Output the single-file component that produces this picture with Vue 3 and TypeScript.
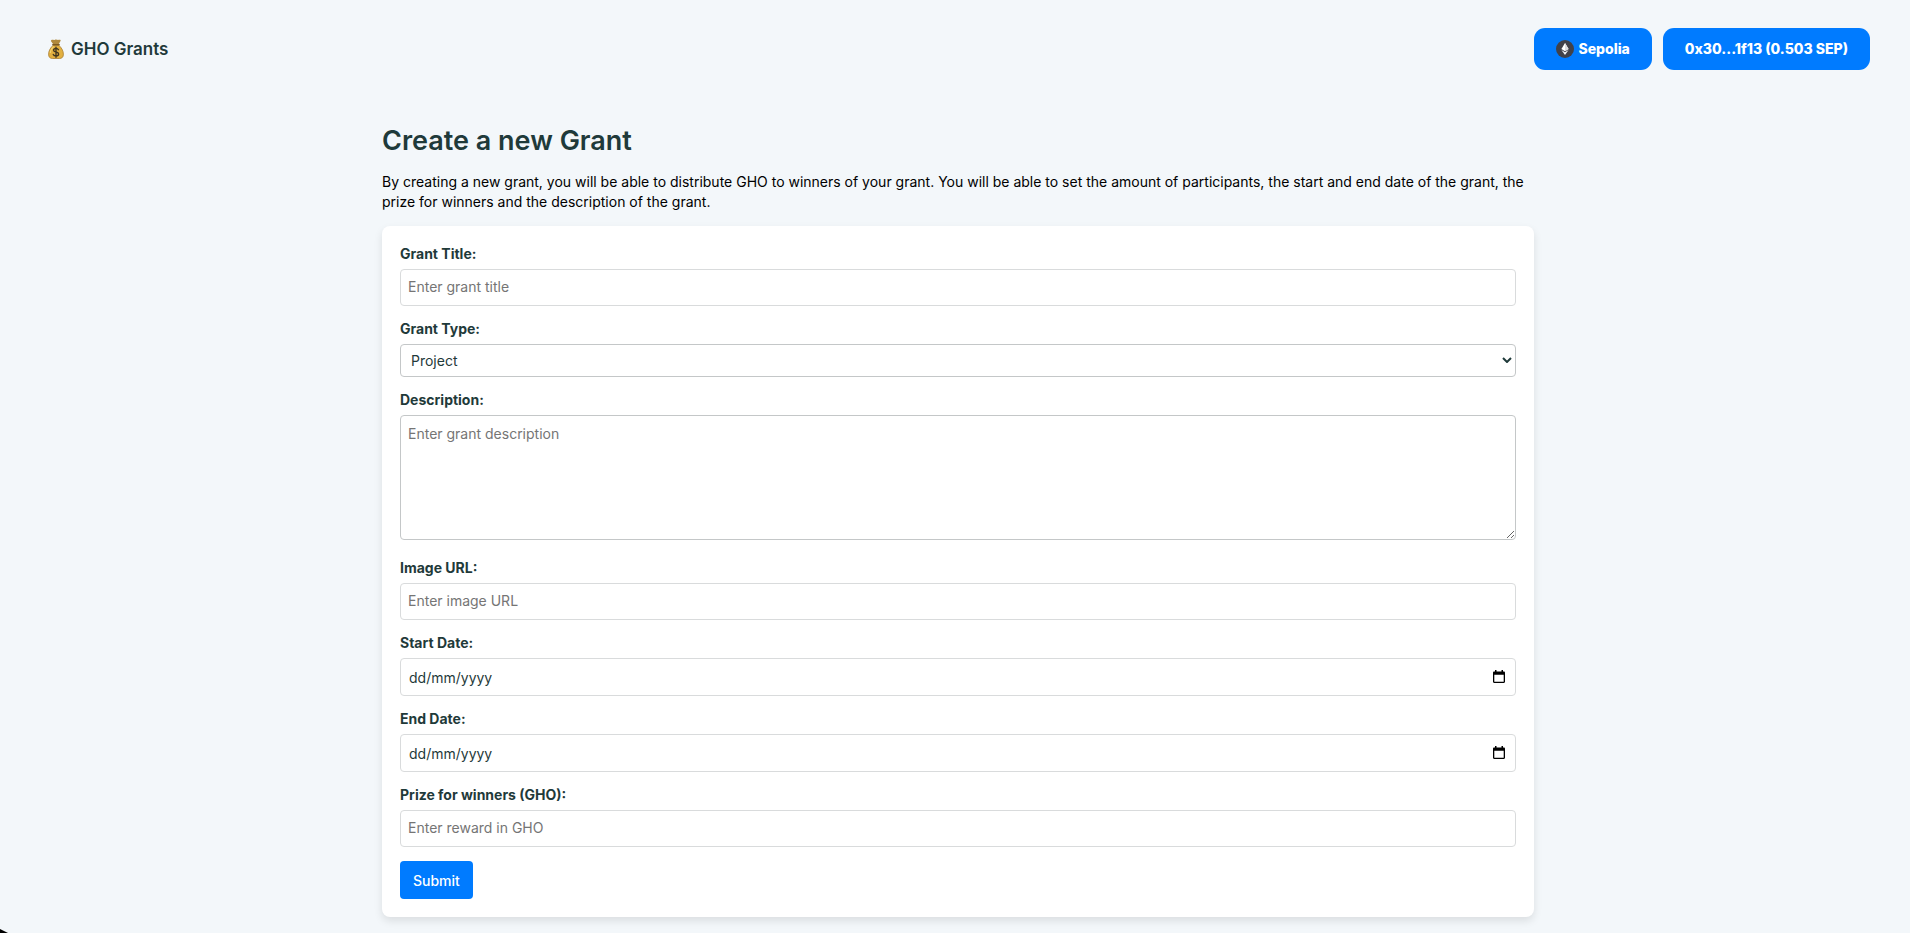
<script setup lang="ts">
import { reactive } from 'vue'

interface GrantForm {
  title: string
  type: string
  description: string
  imageUrl: string
  startDate: string
  endDate: string
  prize: string
}

const form = reactive<GrantForm>({
  title: '',
  type: 'project',
  description: '',
  imageUrl: '',
  startDate: '',
  endDate: '',
  prize: '',
})
</script>

<template>
  <div class="page">
    <header class="topbar">
      <a class="brand" href="#">
        <svg class="brand-icon" viewBox="0 0 16 20" aria-hidden="true">
          <path d="M3.200 1.200C4.600.2 5.600 1.400 7 .7 8.600 0 9.400 1.300 10.800.8c1.400-.4 2.400.2 1.700 1.300L10.600 5.400H5.400L3.200 2.600c-.4-.6-.4-1 0-1.400Z" fill="#b18a3e" />
          <path d="M5.300 6.200h5.400c2.800 2.400 4.700 5.600 4.700 9 0 3-1.500 4.200-4 4.300H4.600C2 19.400.6 18.200.6 15.200c0-3.400 1.900-6.600 4.700-9Z" fill="#e2b040" stroke="#a97e30" stroke-width=".8" />
          <path d="M2.300 13.500c.4-2.400 1.500-4.200 3-5.600" fill="none" stroke="#f5d675" stroke-width="1.200" stroke-linecap="round" />
          <path d="M4.800 5.700h6.400" stroke="#7c5a22" stroke-width="1.400" stroke-linecap="round" />
          <path d="M10.400 10.700c-.4-.9-1.300-1.300-2.400-1.300-1.400 0-2.400.7-2.400 1.800 0 2.500 5 1.200 5 3.800 0 1.200-1.100 1.900-2.600 1.900-1.300 0-2.300-.5-2.700-1.500M8 8.200v10" fill="none" stroke="#41361f" stroke-width="1.400" stroke-linecap="round" />
        </svg>
        <span>GHO Grants</span>
      </a>
      <div class="wallet">
        <button type="button" class="pill">
          <svg class="chain-icon" viewBox="0 0 18 18" aria-hidden="true">
            <circle cx="9" cy="9" r="9" fill="#414149" />
            <path d="M9 3 5.400 9 9 11.200 12.600 9Z" fill="#fff" />
            <path d="M9 3v8.200L12.600 9Z" fill="#dcdce0" />
            <path d="M5.400 10.100 9 12.300l3.600-2.200L9 15Z" fill="#f4f4f6" />
          </svg>
          <span>Sepolia</span>
        </button>
        <button type="button" class="pill">0x30...1f13 (0.503 SEP)</button>
      </div>
    </header>

    <main class="content">
      <h1>Create a new Grant</h1>
      <p class="intro">
        By creating a new grant, you will be able to distribute GHO to winners of your grant. You will be able to set
        the amount of participants, the start and end date of the grant, the prize for winners and the description of
        the grant.
      </p>

      <form class="card" @submit.prevent>
        <div class="field">
          <label for="title">Grant Title:</label>
          <input id="title" v-model="form.title" type="text" placeholder="Enter grant title" />
        </div>
        <div class="field">
          <label for="type">Grant Type:</label>
          <div class="control">
            <select id="type" v-model="form.type">
              <option value="project">Project</option>
            </select>
            <svg class="chevron" viewBox="0 0 10 6" aria-hidden="true">
              <path d="m1 1 4 4 4-4" fill="none" stroke="#1f3a3a" stroke-width="2" />
            </svg>
          </div>
        </div>
        <div class="field field-area">
          <label for="description">Description:</label>
          <textarea id="description" v-model="form.description" placeholder="Enter grant description"></textarea>
        </div>
        <div class="field">
          <label for="image">Image URL:</label>
          <input id="image" v-model="form.imageUrl" type="text" placeholder="Enter image URL" />
        </div>
        <div class="field">
          <label for="start">Start Date:</label>
          <div class="control">
            <input id="start" v-model="form.startDate" class="date" type="text" inputmode="numeric" placeholder="dd/mm/yyyy" />
            <button type="button" class="picker" aria-label="Choose start date">
              <svg viewBox="0 0 12 14" aria-hidden="true">
                <path d="M2 0h1.500v1.500h5V0H10v1.500h.8c.7 0 1.200.5 1.200 1.200v9.100c0 .7-.5 1.200-1.200 1.200H1.200C.5 13 0 12.500 0 11.800V2.700C0 2 .5 1.500 1.200 1.500H2ZM1.300 4.800v6.900h9.400V4.800Z" fill="#000" fill-rule="evenodd" />
              </svg>
            </button>
          </div>
        </div>
        <div class="field">
          <label for="end">End Date:</label>
          <div class="control">
            <input id="end" v-model="form.endDate" class="date" type="text" inputmode="numeric" placeholder="dd/mm/yyyy" />
            <button type="button" class="picker" aria-label="Choose end date">
              <svg viewBox="0 0 12 14" aria-hidden="true">
                <path d="M2 0h1.500v1.500h5V0H10v1.500h.8c.7 0 1.200.5 1.200 1.200v9.100c0 .7-.5 1.200-1.200 1.200H1.200C.5 13 0 12.500 0 11.800V2.700C0 2 .5 1.500 1.200 1.500H2ZM1.300 4.800v6.900h9.400V4.800Z" fill="#000" fill-rule="evenodd" />
              </svg>
            </button>
          </div>
        </div>
        <div class="field">
          <label for="prize">Prize for winners (GHO):</label>
          <input id="prize" v-model="form.prize" type="text" placeholder="Enter reward in GHO" />
        </div>
        <button type="submit" class="submit">Submit</button>
      </form>
    </main>
    <span class="corner" aria-hidden="true"></span>
  </div>
</template>

<style>
body {
  background: #f3f7fa;
}
</style>

<style scoped>
.page {
  min-height: 100vh;
  box-sizing: border-box;
  padding-bottom: 16px;
  background: #f3f7fa;
  color: #1f3a3a;
  font-family: Inter, "Liberation Sans", sans-serif;
  font-size: 14px;
}

.topbar {
  display: flex;
  align-items: center;
  justify-content: space-between;
  padding: 28px 40px 28px 48px;
}

.brand {
  display: flex;
  align-items: center;
  gap: 7px;
  color: inherit;
  font-size: 17px;
  font-weight: 600;
  text-decoration: none;
}

.brand-icon {
  width: 16px;
  height: 20px;
}

.wallet {
  display: flex;
  gap: 11px;
}

.pill {
  display: flex;
  align-items: center;
  gap: 4px;
  height: 42px;
  padding: 0 22px 1px;
  border: 0;
  border-radius: 11px;
  background: #007bff;
  color: #fff;
  font: inherit;
  font-weight: 800;
}

.chain-icon {
  width: 18px;
  height: 18px;
}

.content {
  padding: 0 calc(20% - 6px) 0 20%;
}

h1 {
  margin: 25px 0 13px;
  font-size: 27px;
  font-weight: 600;
  line-height: 36px;
}

.intro {
  margin: 0 0 14px;
  color: #000;
  line-height: 20px;
}

.card {
  display: flex;
  flex-direction: column;
  align-items: flex-start;
  gap: 13px;
  padding: 18px;
  border-radius: 8px;
  background: #fff;
  box-shadow: 0 4px 8px rgba(0, 0, 0, 0.1);
}

.field {
  display: flex;
  flex-direction: column;
  gap: 5px;
  width: 100%;
}

.field-area {
  padding-bottom: 5px;
}

label {
  font-weight: 700;
  line-height: 20px;
}

input,
select,
textarea {
  display: block;
  width: 100%;
  height: 37px;
  box-sizing: border-box;
  margin: 0;
  padding: 0 7px 2px;
  border: 1px solid #d9dbdc;
  border-radius: 4px;
  background: #fff;
  color: inherit;
  font: inherit;
}

input::placeholder,
textarea::placeholder {
  color: #757575;
}

.control {
  position: relative;
}

select {
  height: 33px;
  padding: 0 10px;
  border-color: #c4c7c8;
  appearance: none;
}

.chevron {
  position: absolute;
  top: 13px;
  right: 4px;
  width: 10px;
  height: 6px;
  pointer-events: none;
}

textarea {
  height: 125px;
  padding: 9px 7px;
  border-color: #c4c7c8;
  resize: vertical;
}

.date {
  height: 38px;
  padding: 0 36px 0 8px;
}

.date::placeholder {
  color: #1f3a3a;
}

.picker {
  position: absolute;
  top: 12px;
  right: 11px;
  padding: 0;
  border: 0;
  background: none;
}

.picker svg {
  display: block;
  width: 12px;
  height: 14px;
}

.submit {
  height: 38px;
  margin-top: 1px;
  padding: 0 13px;
  border: 0;
  border-radius: 4px;
  background: #007bff;
  color: #fff;
  font: inherit;
  font-weight: 500;
}

.corner {
  position: fixed;
  bottom: 0;
  left: 0;
  width: 8px;
  height: 4px;
  background: #000;
  clip-path: polygon(0 0, 50% 50%, 100% 100%, 0 100%);
}
</style>
